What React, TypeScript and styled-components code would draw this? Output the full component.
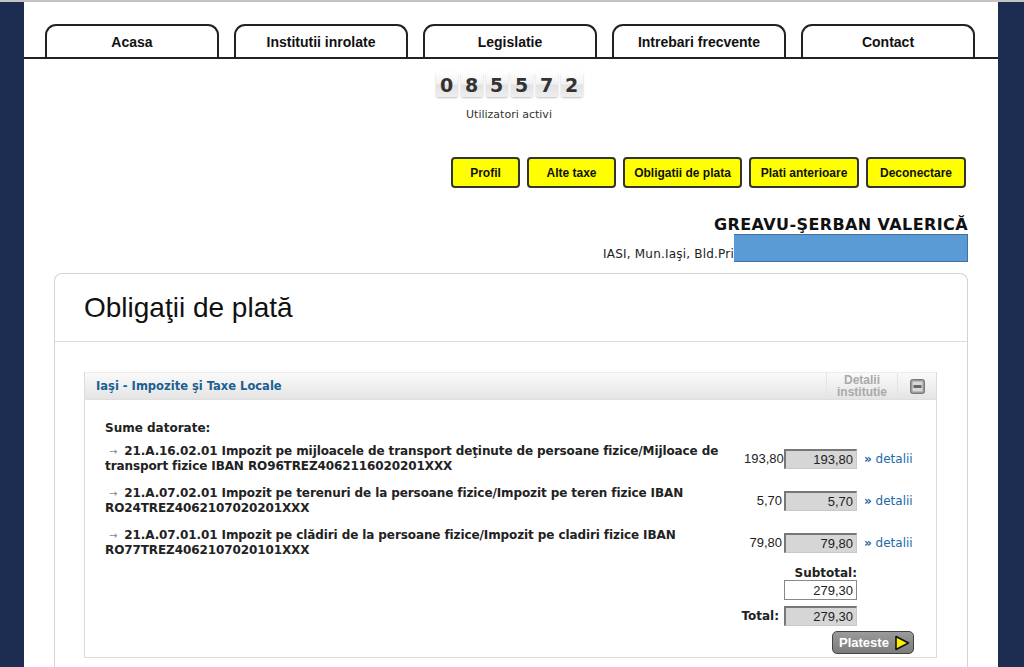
import styled, { createGlobalStyle } from "styled-components"

const GlobalStyle = createGlobalStyle`
  html, body {
    margin: 0;
    padding: 0;
    background: #1d2d52;
  }
  body {
    font-family: "DejaVu Sans", Verdana, sans-serif;
  }
`

const tabs = ["Acasa", "Institutii inrolate", "Legislatie", "Intrebari frecvente", "Contact"]
const actions = [
  { label: "Profil", width: 69 },
  { label: "Alte taxe", width: 89 },
  { label: "Obligatii de plata", width: 119 },
  { label: "Plati anterioare", width: 110 },
  { label: "Deconectare", width: 100 },
]
const counter = "085572"

const obligations = [
  {
    text: "21.A.16.02.01 Impozit pe mijloacele de transport deţinute de persoane fizice/Mijloace de transport fizice IBAN RO96TREZ4062116020201XXX",
    amount: "193,80",
  },
  {
    text: "21.A.07.02.01 Impozit pe terenuri de la persoane fizice/Impozit pe teren fizice IBAN RO24TREZ4062107020201XXX",
    amount: "5,70",
  },
  {
    text: "21.A.07.01.01 Impozit pe clădiri de la persoane fizice/Impozit pe cladiri fizice IBAN RO77TREZ4062107020101XXX",
    amount: "79,80",
  },
]

const App = () => {
  return (
    <Page>
      <GlobalStyle />
      <Container>
        <TabBar>
          {tabs.map((t) => <Tab key={t}>{t}</Tab>)}
        </TabBar>

        <Counter>
          <Digits>
            {counter.split("").map((d, i) => <Digit key={i}>{d}</Digit>)}
          </Digits>
          <CounterLabel>Utilizatori activi</CounterLabel>
        </Counter>

        <Actions>
          {actions.map((a) => <ActionButton key={a.label} $w={a.width}>{a.label}</ActionButton>)}
        </Actions>

        <UserName>GREAVU-ŞERBAN VALERICĂ</UserName>
        <AddressRow>
          <Address>IASI, Mun.Iaşi, Bld.Pri</Address>
          <Redacted />
        </AddressRow>

        <Panel>
          <PanelHead>
            <PanelTitle>Obligaţii de plată</PanelTitle>
          </PanelHead>
          <PanelBody>
            <Institution>
              <InstHeader>
                <InstTitle>Iaşi - Impozite şi Taxe Locale</InstTitle>
                <InstDetails>Detalii<br />institutie</InstDetails>
                <InstToggle>
                  <svg width="15" height="15" viewBox="0 0 15 15">
                    <rect x="0.5" y="0.5" width="14" height="14" rx="2" fill="#9a9a9a" stroke="#777" />
                    <rect x="2.5" y="2.5" width="10" height="10" fill="#d8d8d8" />
                    <rect x="3.5" y="6" width="8" height="3" fill="#666" />
                  </svg>
                </InstToggle>
              </InstHeader>

              <InstContent>
                <SectionLabel>Sume datorate:</SectionLabel>
                {obligations.map((o) => (
                  <ItemRow key={o.amount}>
                    <ItemText>{o.text}</ItemText>
                    <PlainAmount>{o.amount}</PlainAmount>
                    <AmountBox readOnly value={o.amount} />
                    <DetailLink><b>»</b> detalii</DetailLink>
                  </ItemRow>
                ))}

                <Totals>
                  <SubtotalBlock>
                    <TotalLabel>Subtotal:</TotalLabel>
                    <AmountBox $white readOnly value="279,30" />
                  </SubtotalBlock>
                  <TotalRow>
                    <TotalLabel>Total:</TotalLabel>
                    <AmountBox readOnly value="279,30" />
                  </TotalRow>
                  <PayButton>
                    Plateste
                    <svg width="16" height="16" viewBox="0 0 16 16">
                      <path d="M2 1.5 L14.5 8 L2 14.5 Z" fill="#ffee00" stroke="#111" strokeWidth="1.6" strokeLinejoin="round" />
                    </svg>
                  </PayButton>
                </Totals>
              </InstContent>
            </Institution>
          </PanelBody>
        </Panel>
      </Container>
    </Page>
  )
}

export default App

const Page = styled.div`
    display: flex;
    padding-left: 24px;
    min-height: 667px;
    border-top: 2px solid #c4c4c4;
    box-sizing: border-box;
`

const Container = styled.div`
    width: 974px;
    background: #fff;
    min-height: 665px;
`

const TabBar = styled.div`
    display: flex;
    gap: 15px;
    padding: 22px 0 0 21px;
    border-bottom: 2px solid #222;
`

const Tab = styled.div`
    width: 170px;
    height: 31px;
    border: 2px solid #222;
    border-bottom: none;
    border-radius: 11px 11px 0 0;
    display: flex;
    align-items: center;
    justify-content: center;
    font-family: "Liberation Sans", Arial, sans-serif;
    font-weight: bold;
    font-size: 14px;
    color: #111;
`

const Counter = styled.div`
    display: flex;
    flex-direction: column;
    align-items: center;
    margin-top: 13px;
    padding-right: 4px;
`

const Digits = styled.div`
    display: flex;
    gap: 3px;
`

const Digit = styled.div`
    width: 22px;
    height: 25px;
    border-radius: 3px;
    background: linear-gradient(#ffffff 0%, #f1f1f1 49%, #e2e2e2 51%, #eeeeee 100%);
    box-shadow: 0 1px 2px rgba(0,0,0,0.25);
    display: flex;
    align-items: center;
    justify-content: center;
    font-family: "DejaVu Sans", Verdana, sans-serif;
    font-weight: bold;
    font-size: 19px;
    color: #333;
`

const CounterLabel = styled.div`
    margin-top: 11px;
    font-size: 11px;
    line-height: 14px;
    color: #333;
`

const Actions = styled.div`
    display: flex;
    justify-content: flex-end;
    gap: 7px;
    margin-top: 35px;
    padding-right: 32px;
`

const ActionButton = styled.button<{ $w: number }>`
    width: ${(p) => p.$w}px;
    height: 31px;
    padding: 0;
    background: #ffff00;
    border: 2px solid #333;
    border-radius: 4px;
    font-family: "Liberation Sans", Arial, sans-serif;
    font-weight: bold;
    font-size: 12px;
    color: #111;
    cursor: pointer;
`

const UserName = styled.div`
    text-align: right;
    padding-right: 30px;
    margin-top: 27px;
    font-weight: bold;
    font-size: 16px;
    letter-spacing: 0.4px;
    line-height: 19px;
    color: #111;
`

const AddressRow = styled.div`
    display: flex;
    justify-content: flex-end;
    align-items: flex-end;
    padding-right: 30px;
`

const Address = styled.span`
    font-size: 12px;
    letter-spacing: 0.2px;
    line-height: 14px;
    color: #222;
    padding-bottom: 1px;
`

const Redacted = styled.div`
    width: 233px;
    height: 26px;
    background: #5b9bd5;
    border: 1px solid #41719c;
    border-left: none;
`

const Panel = styled.div`
    margin: 11px 30px 0 30px;
    border: 1px solid #d4d4d4;
    border-bottom: none;
    border-radius: 8px 8px 0 0;
    min-height: 395px;
`

const PanelHead = styled.div`
    height: 67px;
    display: flex;
    align-items: center;
    padding-left: 29px;
    border-bottom: 1px solid #dcdcdc;
`

const PanelTitle = styled.h1`
    margin: 0;
    font-family: "Liberation Sans", Arial, sans-serif;
    font-weight: normal;
    font-size: 28px;
    color: #111;
`

const PanelBody = styled.div`
    padding: 30px 30px 0 29px;
`

const Institution = styled.div`
    border: 1px solid #dcdcdc;
    border-top: none;
`

const InstHeader = styled.div`
    display: flex;
    height: 26px;
    background: linear-gradient(#fafafa, #e4e4e4);
    border-top: 1px solid #ececec;
    border-bottom: 1px solid #dedede;
`

const InstTitle = styled.div`
    flex: 1;
    display: flex;
    align-items: center;
    padding-left: 11px;
    font-weight: bold;
    font-size: 11.5px;
    color: #1c5f92;
`

const InstDetails = styled.div`
    width: 70px;
    border-left: 1px solid #e4e4e4;
    border-right: 1px solid #e4e4e4;
    text-align: center;
    font-family: "Liberation Sans", Arial, sans-serif;
    font-weight: bold;
    font-size: 12px;
    line-height: 12px;
    color: #aaa;
    padding-top: 1px;
`

const InstToggle = styled.div`
    width: 38px;
    display: flex;
    align-items: center;
    justify-content: center;
`

const InstContent = styled.div`
    padding: 21px 25px 3px 20px;
`

const SectionLabel = styled.div`
    font-weight: bold;
    font-size: 12px;
    line-height: 14px;
    color: #222;
    margin-bottom: 9px;
`

const ItemRow = styled.div`
    display: grid;
    grid-template-columns: 1fr 40px 73px 54px;
    align-items: center;
    margin-bottom: 13px;
`

const ItemText = styled.div`
    font-weight: bold;
    font-size: 12px;
    letter-spacing: -0.1px;
    line-height: 14px;
    color: #222;

    &::before {
        content: "→";
        display: inline-block;
        margin: 0 7px 0 4px;
        font-weight: normal;
        font-size: 10px;
        color: #888;
    }
`

const PlainAmount = styled.div`
    text-align: right;
    font-family: "Liberation Sans", Arial, sans-serif;
    font-size: 13px;
    color: #222;
    padding-right: 2px;
`

const AmountBox = styled.input<{ $white?: boolean }>`
    width: 73px;
    height: 20px;
    box-sizing: border-box;
    text-align: right;
    padding: 0 3px;
    margin: 0;
    font-family: "Liberation Sans", Arial, sans-serif;
    font-size: 13px;
    color: #222;
    background: ${(p) => (p.$white ? "#fff" : "#d6d6d6")};
    border: 1px solid ${(p) => (p.$white ? "#888" : "#c8c8c8")};
    border-top-color: ${(p) => (p.$white ? "#888" : "#777")};
    border-left-color: ${(p) => (p.$white ? "#888" : "#777")};
    ${(p) => (!p.$white ? "border-top-width: 2px; border-left-width: 2px;" : "")}
    outline: none;
`

const DetailLink = styled.a`
    padding-left: 7px;
    font-size: 12px;
    color: #1c6aa8;
    cursor: pointer;
    white-space: nowrap;
`

const Totals = styled.div`
    display: flex;
    flex-direction: column;
    align-items: flex-end;
    padding-right: 54px;
    margin-top: -4px;
`

const SubtotalBlock = styled.div`
    display: flex;
    flex-direction: column;
    align-items: flex-end;
`

const TotalLabel = styled.div`
    font-weight: bold;
    font-size: 12px;
    line-height: 14px;
    color: #222;
`

const TotalRow = styled.div`
    display: flex;
    align-items: center;
    gap: 5px;
    margin-top: 6px;
`

const PayButton = styled.button`
    margin-top: 5px;
    margin-right: -57px;
    width: 82px;
    height: 23px;
    display: flex;
    align-items: center;
    justify-content: space-between;
    padding: 0 3px 0 6px;
    background: linear-gradient(#9a9a9a, #7c7c7c);
    border: 1px solid #444;
    border-radius: 5px;
    font-family: "Liberation Sans", Arial, sans-serif;
    font-weight: bold;
    font-size: 13px;
    color: #fff;
    cursor: pointer;
`
